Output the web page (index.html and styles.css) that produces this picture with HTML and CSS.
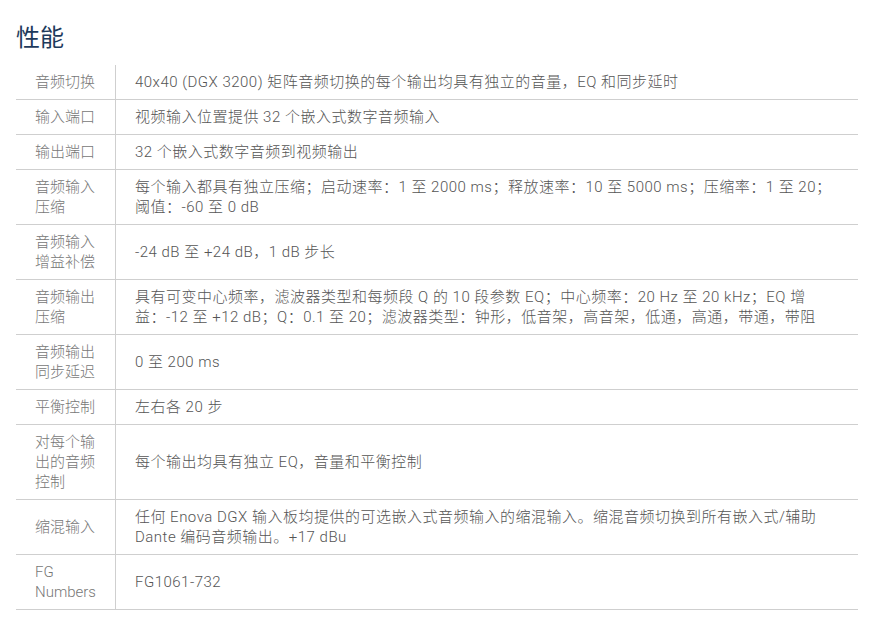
FILE: index.html
```html
<!DOCTYPE html>
<html>
<head>
    <meta charset="utf-8">
    <title>性能</title>
    <link rel="stylesheet" href="styles.css">
</head>
<body>
    <content>
        <h2 class="spec-title">性能</h2>

        <!-- spec table: label column on the left, values on the right -->
        <table class="spec-table">
            <tr>
                <th>音频切换</th>
                <td>40x40 (DGX 3200) 矩阵音频切换的每个输出均具有独立的音量，EQ 和同步延时</td>
            </tr>
            <tr>
                <th>输入端口</th>
                <td>视频输入位置提供 32 个嵌入式数字音频输入</td>
            </tr>
            <tr>
                <th>输出端口</th>
                <td>32 个嵌入式数字音频到视频输出</td>
            </tr>
            <tr>
                <th>音频输入压缩</th>
                <td>每个输入都具有独立压缩；启动速率：1 至 2000 ms；释放速率：10 至 5000 ms；压缩率：1 至 20；阈值：-60 至 0 dB</td>
            </tr>
            <tr>
                <th>音频输入增益补偿</th>
                <td>-24 dB 至 +24 dB，1 dB 步长</td>
            </tr>
            <tr>
                <th>音频输出压缩</th>
                <td>具有可变中心频率，滤波器类型和每频段 Q 的 10 段参数 EQ；中心频率：20 Hz 至 20 kHz；EQ 增益：-12 至 +12 dB；Q：0.1 至 20；滤波器类型：钟形，低音架，高音架，低通，高通，带通，带阻</td>
            </tr>
            <tr>
                <th>音频输出同步延迟</th>
                <td>0 至 200 ms</td>
            </tr>
            <tr>
                <th>平衡控制</th>
                <td>左右各 20 步</td>
            </tr>
            <tr>
                <th>对每个输出的音频控制</th>
                <td>每个输出均具有独立 EQ，音量和平衡控制</td>
            </tr>
            <tr>
                <th>缩混输入</th>
                <td>任何 Enova DGX 输入板均提供的可选嵌入式音频输入的缩混输入。缩混音频切换到所有嵌入式/辅助 Dante 编码音频输出。+17 dBu</td>
            </tr>
            <tr>
                <th>FG Numbers</th>
                <td>FG1061-732</td>
            </tr>
        </table>
    </content>
</body>
</html>
```

FILE: styles.css
```css
body {
    margin: 0;
    padding: 0;
    background-color: #ffffff;
    font-family: Roboto, "Noto Sans CJK SC", sans-serif;
    color: #555555;
}

content {
    display: block;
    padding: 24px 16px 0 16px;
}

.spec-title {
    margin: 0 0 13px 0;
    font-size: 24px;
    line-height: 28px;
    font-weight: 400;
    color: #1d3a5c;
}

/** Spec table **/

.spec-table {
    width: 842px;
    border-collapse: collapse;
    font-size: 15px;
    line-height: 20px;
    font-weight: 300;
}

.spec-table th,
.spec-table td {
    padding: 7px 19px;
    border-bottom: 1px solid #cfcfcf;
    text-align: left;
    vertical-align: middle;
}

.spec-table th {
    width: 60px;
    font-weight: 300;
    color: #777777;
    border-right: 1px solid #cfcfcf;
}

/* values run a touch wider than the labels */
.spec-table td {
    color: #555555;
    letter-spacing: 0.5px;
}
```
